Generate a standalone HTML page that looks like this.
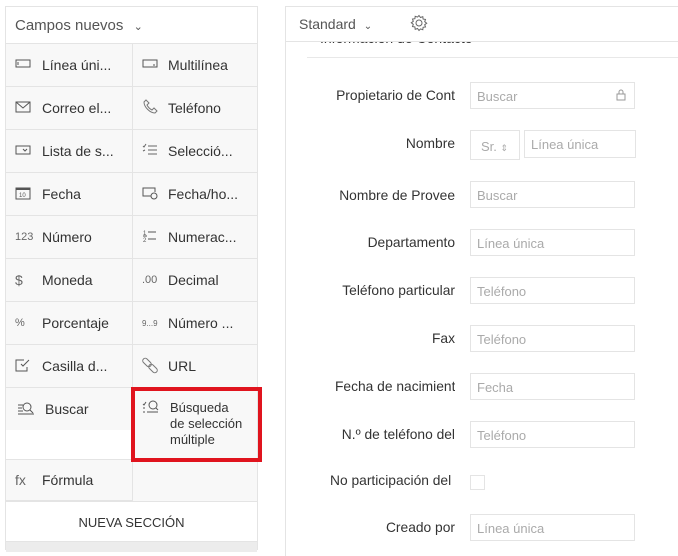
<!DOCTYPE html>
<html><head><meta charset="utf-8"><style>
*{box-sizing:border-box;margin:0;padding:0}
body{width:678px;height:550px;overflow:hidden;background:#fff;font-family:"Liberation Sans",Arial,sans-serif;position:relative;color:#333}
.lp{position:absolute;left:5px;top:6px;width:253px;height:544px;border:1px solid #e4e4e4;background:#f8f8f8}
.hd{position:absolute;left:0;top:0;width:251px;height:37px;background:#fff;border-bottom:1px solid #e4e4e4;font-size:15px;color:#555;padding:10px 0 0 9px}
.c{position:absolute;height:43px;border-bottom:1px solid #e4e4e4;font-size:14px;color:#333;display:flex;align-items:center}
.c.l{left:0;width:127px;border-right:1px solid #e4e4e4}
.c.r{left:127px;width:124px}
.ic{display:inline-block;width:26px;padding-left:9px;font-size:11px;color:#666}
.c.l .ic{width:36px}
.c.r .ic{width:35px;padding-left:9px}
.rp{position:absolute;left:285px;top:6px;width:400px;height:550px;border-left:1px solid #e4e4e4;border-top:1px solid #e4e4e4}
.lab{position:absolute;right:223px;font-size:13.8px;color:#333;text-align:right;white-space:nowrap;overflow:hidden;width:120px}
.in{position:absolute;left:470px;width:165px;height:27px;border:1px solid #e4e4e4;font-size:13px;color:#aaa;padding:6px 0 0 6px}
</style></head><body>
<div class="lp">
<div class="hd">Campos nuevos <span style="font-size:11px;margin-left:6px">&#8964;</span></div>
<div class="c l" style="top:37px"><span class="ic"><svg width="16" height="10"><rect x="1" y="1" width="14" height="7" fill="none" stroke="#555"/><path d="M3 3v3" stroke="#555"/></svg></span>Línea úni...</div>
<div class="c r" style="top:37px"><span class="ic"><svg width="16" height="10"><rect x="1" y="1" width="14" height="7" fill="none" stroke="#555"/><path d="M12 5v2" stroke="#555"/></svg></span>Multilínea</div>
<div class="c l" style="top:80px"><span class="ic"><svg width="16" height="12"><rect x="1" y="1" width="14" height="10" fill="none" stroke="#555"/><path d="M1 1l7 6 7-6" fill="none" stroke="#555"/></svg></span>Correo el...</div>
<div class="c r" style="top:80px"><span class="ic"><svg width="16" height="16"><path d="M4 1l3 3-2 2c1 2 3 4 5 5l2-2 3 3-2 2C8 14 2 8 2 3z" fill="none" stroke="#777"/></svg></span>Teléfono</div>
<div class="c l" style="top:123px"><span class="ic"><svg width="16" height="10"><rect x="1" y="1" width="14" height="8" fill="none" stroke="#555"/><path d="M8 4l2 2 2-2" fill="none" stroke="#555"/></svg></span>Lista de s...</div>
<div class="c r" style="top:123px"><span class="ic"><svg width="16" height="14"><path d="M1 3l1 1 2-3M6 3h9M6 7h9M6 11h9M1 8l2-1" stroke="#666" fill="none"/></svg></span>Selecció...</div>
<div class="c l" style="top:166px"><span class="ic"><svg width="16" height="14"><rect x="1" y="2" width="14" height="11" fill="none" stroke="#555"/><path d="M1 3h14" stroke="#555" stroke-width="2"/><text x="4" y="11" font-size="6" fill="#555">10</text></svg></span>Fecha</div>
<div class="c r" style="top:166px"><span class="ic"><svg width="16" height="14"><path d="M9 10H1V2h12v4" fill="none" stroke="#555"/><circle cx="12" cy="10" r="3" fill="none" stroke="#555"/></svg></span>Fecha/ho...</div>
<div class="c l" style="top:209px"><span class="ic">123</span>Número</div>
<div class="c r" style="top:209px"><span class="ic"><svg width="16" height="14"><text x="1" y="6" font-size="6" fill="#555">1</text><text x="1" y="13" font-size="6" fill="#555">2</text><path d="M1 7h4M6 3h8M6 10h8" stroke="#555"/></svg></span>Numerac...</div>
<div class="c l" style="top:252px"><span class="ic" style="font-size:14px">$</span>Moneda</div>
<div class="c r" style="top:252px"><span class="ic">.00</span>Decimal</div>
<div class="c l" style="top:295px"><span class="ic">%</span>Porcentaje</div>
<div class="c r" style="top:295px"><span class="ic" style="font-size:8px">9...9</span>Número ...</div>
<div class="c l" style="top:338px"><span class="ic"><svg width="16" height="14"><path d="M12 9v4H1V2h8" fill="none" stroke="#555"/><path d="M6 6l2 2 6-6" fill="none" stroke="#555"/></svg></span>Casilla d...</div>
<div class="c r" style="top:338px"><span class="ic"><svg width="18" height="18"><g fill="none" stroke="#777"><rect x="0" y="4" width="10" height="5" rx="2.5" transform="rotate(45 5 6.5)"/><rect x="6" y="10" width="10" height="5" rx="2.5" transform="rotate(45 11 12.5)"/></g></svg></span>URL</div>
<div class="c l" style="top:381px;height:42px;border-bottom:none"><span class="ic" style="padding-left:11px;width:39px"><svg width="18" height="14"><path d="M1 4h5M1 7h4M1 10h5M1 13h16" stroke="#555"/><circle cx="10" cy="6" r="4" fill="none" stroke="#555"/><path d="M13 9l3 3" stroke="#555"/></svg></span>Buscar</div>
<div style="position:absolute;left:0;top:423px;width:127px;height:30px;background:#fff;border-right:1px solid #e4e4e4;border-bottom:1px solid #e4e4e4"></div>
<div class="c r" style="top:381px;height:72px;align-items:flex-start;padding-top:12px;font-size:13px;line-height:16px"><span class="ic" style="width:37px"><svg width="18" height="14"><path d="M1 4l1 1 2-3M1 8h2M1 12h2M5 12h11" stroke="#555" fill="none"/><circle cx="11" cy="5" r="4" fill="none" stroke="#555"/><path d="M14 8l2 2" stroke="#555"/></svg></span><span>Búsqueda<br>de selección<br>múltiple</span></div>
<div class="c l" style="top:453px;height:41px"><span class="ic" style="font-size:14px">fx</span>Fórmula</div>
<div style="position:absolute;left:0;top:494px;width:251px;height:1px;background:#e4e4e4"></div>
<div style="position:absolute;left:0;top:495px;width:251px;height:40px;background:#fff;border-bottom:1px solid #e4e4e4;font-size:13px;text-align:center;padding-top:13px;color:#333">NUEVA SECCIÓN</div>
<div style="position:absolute;left:0;top:535px;width:251px;height:10px;background:#ececec"></div>
</div>
<div style="position:absolute;left:131px;top:387px;width:131px;height:75px;border:4px solid #e0141e"></div>
<div style="position:absolute;left:320px;top:30px;font-size:14px;color:#333;white-space:nowrap">Información de Contacto</div>
<div class="rp">
<div style="position:absolute;left:0;top:0;width:400px;height:35px;border-bottom:1px solid #e4e4e4;background:#fff;font-size:14px;color:#555;padding:9px 0 0 13px">Standard <span style="font-size:10px;margin-left:4px">&#8964;</span><span style="position:absolute;left:124px;top:7px"><svg width="18" height="18" viewBox="0 0 18 18"><circle cx="9" cy="9" r="3" fill="none" stroke="#666"/><path d="M9 1.5l1.5 2 2.3-.8.3 2.4 2.4.3-.8 2.3 2 1.5-2 1.5.8 2.3-2.4.3-.3 2.4-2.3-.8L9 16.5l-1.5-2-2.3.8-.3-2.4-2.4-.3.8-2.3-2-1.5 2-1.5-.8-2.3 2.4-.3.3-2.4 2.3.8z" fill="none" stroke="#666"/></svg></span></div>
</div>
<div style="position:absolute;left:307px;top:57px;width:371px;height:1px;background:#e8e8e8"></div>
<div class="lab" style="top:88px">Propietario de Cont</div><div class="in" style="top:82px">Buscar<span style="position:absolute;right:8px;top:6px"><svg width="10" height="12"><rect x="1" y="5" width="8" height="6" fill="none" stroke="#999"/><path d="M3 5V3a2 2 0 0 1 4 0v2" fill="none" stroke="#999"/></svg></span></div>
<div class="lab" style="top:136px">Nombre</div><div class="in" style="top:130px;width:50px;height:30px;padding-top:8px;padding-left:10px">Sr. <span style="font-size:9px">&#8661;</span></div><div class="in" style="top:130px;left:524px;width:112px;height:28px">Línea única</div>
<div class="lab" style="top:188px">Nombre de Provee</div><div class="in" style="top:181px">Buscar</div>
<div class="lab" style="top:235px">Departamento</div><div class="in" style="top:229px">Línea única</div>
<div class="lab" style="top:283px">Teléfono particular</div><div class="in" style="top:277px">Teléfono</div>
<div class="lab" style="top:331px">Fax</div><div class="in" style="top:325px">Teléfono</div>
<div class="lab" style="top:379px">Fecha de nacimient</div><div class="in" style="top:373px">Fecha</div>
<div class="lab" style="top:427px">N.º de teléfono del</div><div class="in" style="top:421px">Teléfono</div>
<div class="lab" style="top:473px;width:125px">No participación del c</div><div class="in" style="top:475px;width:15px;height:15px;padding:0"></div>
<div class="lab" style="top:520px">Creado por</div><div class="in" style="top:514px">Línea única</div>
</body></html>
